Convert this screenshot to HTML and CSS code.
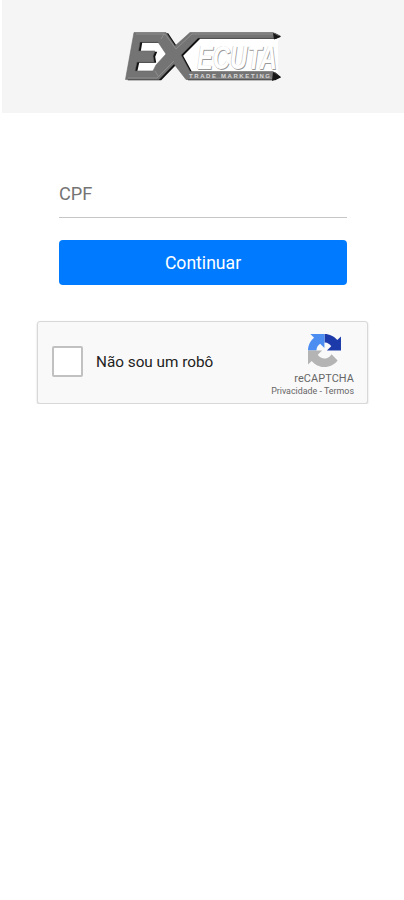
FILE: index.html
```html
<!DOCTYPE html>
<html lang="pt-BR">
<head>
<meta charset="utf-8">
<meta name="viewport" content="width=device-width, initial-scale=1">
<title>Executa Trade Marketing</title>
<link rel="stylesheet" href="styles.css">
</head>
<body>
<header class="header">
<svg class="logo" viewBox="0 0 158 52" role="img" aria-label="Executa Trade Marketing">
<path class="panel" d="M57 25 74 8H154V42H66ZM14 11H38L46 24 34 39H11Z"/>
<path class="shadow" fill-rule="evenodd" transform="translate(2.2 .8)" d="M10 1.5H42L51 15 66 1.5H149L155 4.5 150 7H74L57 24 66 40.5H149L155 45.5 149 48.5H62L50 33 35 48.5H1.5ZM16 11 14.5 20H31L29 25 30 31H13L11 40H29L32 34 42 23 34 11Z"/>
<path class="metal" fill-rule="evenodd" d="M10 1.5H42L51 15 66 1.5H149L155 4.5 150 7H74L57 24 66 40.5H149L155 45.5 149 48.5H62L50 33 35 48.5H1.5ZM16 11 14.5 20H31L29 25 30 31H13L11 40H29L32 34 42 23 34 11Z"/>
<path class="edge" d="M12 3H41L52 18 68 3H149M37 8 40 3M4 47H33L50 30M31 40 34 45M65 47H148"/>
<path class="tip" d="M149 2 156.5 6 150 8.5ZM149 41 156.5 46 148 50Z"/>
<text class="word" x="73" y="38" textLength="80" lengthAdjust="spacingAndGlyphs">ECUTA</text>
<text class="tagline" x="65" y="47.4" textLength="81" lengthAdjust="spacing">TRADE MARKETING</text>
</svg>
</header>
<main class="content">
<form class="form">
<input class="field" type="text" placeholder="CPF" aria-label="CPF">
<button class="submit" type="button">Continuar</button>
</form>
<section class="captcha">
<label class="check"><input class="box" type="checkbox"><span>Não sou um robô</span></label>
<div class="brand">
<svg class="arrows" viewBox="0 0 64 64" aria-hidden="true">
<path fill="#1c3aa9" d="M64 31.955l-.033-1.37V4.687l-7.16 7.16C50.948 4.674 42.033.093 32.05.093V16.353c.485 0 .86.057 1.135.163 4.976.393 9.288 3.14 11.828 7.124l-8.307 8.307L64 31.953"/>
<path fill="#4b8df0" d="M31.862.094l-1.37.033H4.594l7.16 7.16C4.58 13.147 0 22.06 0 32.046H16.26c0-.485.057-.86.163-1.135.393-4.976 3.14-9.288 7.124-11.828l8.307 8.307L31.86.095"/>
<path fill="#b4b4b4" d="M.001 32.045l.033 1.37v25.898l7.16-7.16c5.86 7.173 14.774 11.754 24.76 11.754 10.4 0 19.622-4.96 25.458-12.64l-11.736-11.86a15.55 15.55 0 0 1-4.754 5.334c-2.05 1.6-4.952 2.906-8.968 2.906-.485 0-.86-.057-1.135-.163-4.976-.393-9.288-3.14-11.828-7.124l8.307-8.307L.001 32.045"/>
</svg>
<span class="brand-name">reCAPTCHA</span>
<span class="terms">Privacidade - Termos</span>
</div>
</section>
</main>
</body>
</html>
```
FILE: styles.css
```css
* { box-sizing: border-box; }
body { margin: 0; background: #fff; font-family: Roboto, sans-serif; }
.header { height: 113px; margin-left: 2px; padding: 31px 0 0 122px; background: #f5f5f5; }
.logo { display: block; width: 158px; height: 52px; overflow: visible; }
.panel { fill: #fff; }
.shadow { fill: #111; }
.metal { fill: #747474; stroke: #666; stroke-width: .6; }
.edge { fill: none; stroke: #999; stroke-width: .7; }
.tip { fill: #171717; }
.word { font: italic bold 34px "Liberation Sans", sans-serif; fill: #fff; text-shadow: 1px .7px .7px #999, -.5px -.4px .5px #bbb; }
.tagline { font: bold 6px "Liberation Sans", sans-serif; fill: #d8d8d8; }
.content { padding: 57px 36px 0 37px; }
.form { display: flex; flex-direction: column; gap: 22px; padding: 0 21px 0 22px; }
.field { width: 100%; height: 48px; padding: 0; border: 0; border-bottom: 1px solid #c6c6c6; border-radius: 0; background: none; font: 18.2px Roboto, sans-serif; color: #333; outline: 0; }
.field::placeholder { color: #747474; opacity: 1; }
.submit { width: 100%; height: 45px; padding: 0; border: 0; border-radius: 4px; background: #007bff; color: #fff; font: 17.6px Roboto, sans-serif; }
.captcha { display: flex; justify-content: space-between; height: 83px; margin-top: 36px; padding: 0 13px 0 14px; border: 1px solid #d8d8d8; border-radius: 3px; background: #f9f9f9; box-shadow: 0 1px 2px rgba(0, 0, 0, .18); }
.check { display: flex; align-items: center; gap: 13px; padding-bottom: 2px; font-size: 15.3px; color: #222; white-space: nowrap; }
.box { appearance: none; width: 31px; height: 31px; margin: 0; border: 2px solid #c1c1c1; border-radius: 2px; background: #fff; }
.brand { display: flex; flex-direction: column; align-items: flex-end; padding-top: 12px; color: #666; }
.arrows { width: 33px; height: 33px; margin-right: 13px; }
.brand-name { margin-top: 5px; font-size: 10.9px; line-height: 13px; letter-spacing: .1px; }
.terms { font-size: 8.9px; line-height: 12px; }
```
